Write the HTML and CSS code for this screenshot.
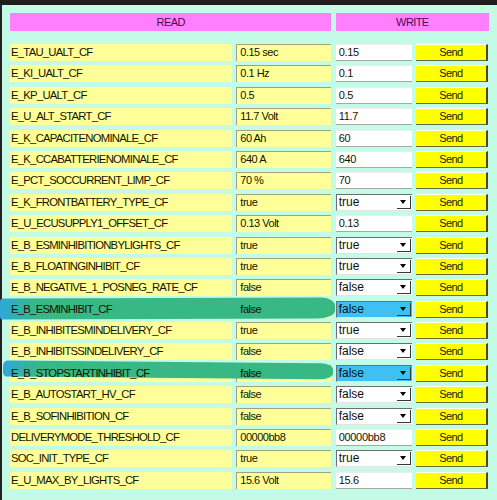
FILE: index.html
```html
<!DOCTYPE html>
<html>
<head>
<meta charset="utf-8">
<link rel="stylesheet" href="styles.css">
</head>
<body>
<div class="topbar"></div>
<div class="frame">
  <div class="mark mark-a"></div>
  <div class="mark mark-b"></div>
  <div class="table">
    <div class="head head-read">READ</div>
    <div class="head head-write">WRITE</div>

    <div class="lbl"><span class="txt">E_TAU_UALT_CF</span></div><div class="val"><span class="txt">0.15 sec</span></div><div class="inp">0.15</div><div class="send">Send</div>
    <div class="lbl"><span class="txt">E_KI_UALT_CF</span></div><div class="val"><span class="txt">0.1 Hz</span></div><div class="inp">0.1</div><div class="send">Send</div>
    <div class="lbl"><span class="txt">E_KP_UALT_CF</span></div><div class="val"><span class="txt">0.5</span></div><div class="inp">0.5</div><div class="send">Send</div>
    <div class="lbl"><span class="txt">E_U_ALT_START_CF</span></div><div class="val"><span class="txt">11.7 Volt</span></div><div class="inp">11.7</div><div class="send">Send</div>
    <div class="lbl"><span class="txt">E_K_CAPACITENOMINALE_CF</span></div><div class="val"><span class="txt">60 Ah</span></div><div class="inp">60</div><div class="send">Send</div>
    <div class="lbl"><span class="txt">E_K_CCABATTERIENOMINALE_CF</span></div><div class="val"><span class="txt">640 A</span></div><div class="inp">640</div><div class="send">Send</div>
    <div class="lbl"><span class="txt">E_PCT_SOCCURRENT_LIMP_CF</span></div><div class="val"><span class="txt">70 %</span></div><div class="inp">70</div><div class="send">Send</div>
    <div class="lbl"><span class="txt">E_K_FRONTBATTERY_TYPE_CF</span></div><div class="val"><span class="txt">true</span></div><div class="combo"><span class="ctext">true</span><span class="btn"><span class="tri"></span></span></div><div class="send">Send</div>
    <div class="lbl"><span class="txt">E_U_ECUSUPPLY1_OFFSET_CF</span></div><div class="val"><span class="txt">0.13 Volt</span></div><div class="inp">0.13</div><div class="send">Send</div>
    <div class="lbl"><span class="txt">E_B_ESMINHIBITIONBYLIGHTS_CF</span></div><div class="val"><span class="txt">true</span></div><div class="combo"><span class="ctext">true</span><span class="btn"><span class="tri"></span></span></div><div class="send">Send</div>
    <div class="lbl"><span class="txt">E_B_FLOATINGINHIBIT_CF</span></div><div class="val"><span class="txt">true</span></div><div class="combo"><span class="ctext">true</span><span class="btn"><span class="tri"></span></span></div><div class="send">Send</div>
    <div class="lbl"><span class="txt">E_B_NEGATIVE_1_POSNEG_RATE_CF</span></div><div class="val"><span class="txt">false</span></div><div class="combo"><span class="ctext">false</span><span class="btn"><span class="tri"></span></span></div><div class="send">Send</div>
    <div class="lbl"><span class="txt">E_B_ESMINHIBIT_CF</span></div><div class="val"><span class="txt">false</span></div><div class="combo combo-sel"><span class="ctext">false</span><span class="btn"><span class="tri"></span></span></div><div class="send">Send</div>
    <div class="lbl"><span class="txt">E_B_INHIBITESMINDELIVERY_CF</span></div><div class="val"><span class="txt">true</span></div><div class="combo"><span class="ctext">true</span><span class="btn"><span class="tri"></span></span></div><div class="send">Send</div>
    <div class="lbl"><span class="txt">E_B_INHIBITSSINDELIVERY_CF</span></div><div class="val"><span class="txt">false</span></div><div class="combo"><span class="ctext">false</span><span class="btn"><span class="tri"></span></span></div><div class="send">Send</div>
    <div class="lbl"><span class="txt">E_B_STOPSTARTINHIBIT_CF</span></div><div class="val"><span class="txt">false</span></div><div class="combo combo-sel"><span class="ctext">false</span><span class="btn"><span class="tri"></span></span></div><div class="send">Send</div>
    <div class="lbl"><span class="txt">E_B_AUTOSTART_HV_CF</span></div><div class="val"><span class="txt">false</span></div><div class="combo"><span class="ctext">false</span><span class="btn"><span class="tri"></span></span></div><div class="send">Send</div>
    <div class="lbl"><span class="txt">E_B_SOFINHIBITION_CF</span></div><div class="val"><span class="txt">false</span></div><div class="combo"><span class="ctext">false</span><span class="btn"><span class="tri"></span></span></div><div class="send">Send</div>
    <div class="lbl"><span class="txt">DELIVERYMODE_THRESHOLD_CF</span></div><div class="val"><span class="txt">00000bb8</span></div><div class="inp">00000bb8</div><div class="send">Send</div>
    <div class="lbl"><span class="txt">SOC_INIT_TYPE_CF</span></div><div class="val"><span class="txt">true</span></div><div class="combo"><span class="ctext">true</span><span class="btn"><span class="tri"></span></span></div><div class="send">Send</div>
    <div class="lbl"><span class="txt">E_U_MAX_BY_LIGHTS_CF</span></div><div class="val"><span class="txt">15.6 Volt</span></div><div class="inp">15.6</div><div class="send">Send</div>
  </div>
</div>
</body>
</html>
```
FILE: styles.css
```css
html, body {
  margin: 0;
  padding: 0;
}
body {
  background: #c4fbe6;
  font-family: "Liberation Sans", Arial, sans-serif;
  color: #141400;
  width: 497px;
  height: 500px;
  overflow: hidden;
}
.topbar {
  height: 5px;
  background: #1e1e1e;
}
.frame {
  position: relative;
  border-left: 2px solid #222;
  padding: 8px 0 0 8px;
  height: 495px;
  box-sizing: border-box;
}
.table {
  display: grid;
  grid-template-columns: 222px 95px 76px 72px;
  grid-template-rows: 26.6px;
  grid-auto-rows: 17px;
  column-gap: 4.33px;
  row-gap: 4.4px;
}
.head {
  height: 18px;
  align-self: start;
  background: #ff80ff;
  color: #4a0a4a;
  font-size: 11px;
  letter-spacing: -0.6px;
  line-height: 18px;
  text-align: center;
}
.head-read { grid-column: 1 / 3; }
.head-write { grid-column: 3 / 5; margin-right: -1px; }
.lbl {
  background: #ffff99;
  font-size: 11.3px;
  letter-spacing: -0.75px;
  line-height: 16px;
  padding-left: 1px;
  white-space: nowrap;
}
.val {
  background: #ffff99;
  border-top: 1px solid #a2a27a;
  border-left: 1px solid #a2a27a;
  box-sizing: border-box;
  font-size: 11px;
  letter-spacing: -0.5px;
  line-height: 15px;
  padding-left: 3px;
  white-space: nowrap;
}
.txt {
  position: relative;
  z-index: 2;
}
.inp {
  background: #fff;
  border-bottom: 1px solid #a8a8a8;
  border-top: 1px solid #ececec;
  box-sizing: border-box;
  font-size: 11px;
  letter-spacing: -0.3px;
  line-height: 15px;
  padding-left: 3px;
}
.combo {
  display: flex;
  align-items: center;
  background: #fff;
  border-top: 1px solid #6e6e6e;
  border-left: 1px solid #6e6e6e;
  border-bottom: 1px solid #e4e4e4;
  box-sizing: border-box;
  padding-left: 2px;
}
.combo-sel {
  background: #3ec0f2;
}
.ctext {
  font-size: 12px;
  line-height: 15px;
  color: #101010;
}
.btn {
  margin-left: auto;
  margin-right: 1px;
  width: 14px;
  height: 13px;
  box-sizing: border-box;
  border-right: 1px solid #383838;
  border-bottom: 1px solid #383838;
  display: flex;
  align-items: center;
  justify-content: center;
}
.tri {
  width: 0;
  height: 0;
  border-left: 3.5px solid transparent;
  border-right: 3.5px solid transparent;
  border-top: 4px solid #000;
}
.send {
  background: #ffff00;
  border-right: 2px solid #4a4a2a;
  border-bottom: 1px solid #6a6a40;
  border-top: 1px solid #fffff0;
  box-sizing: border-box;
  font-size: 11px;
  letter-spacing: -0.6px;
  line-height: 15px;
  text-align: center;
  color: #202010;
}
.mark {
  position: absolute;
  z-index: 1;
  background: linear-gradient(90deg, #2ea8dc 0px, #34b2a0 22px, #38b884 40px, #38b884 100%);
}
.mark-a {
  top: 293px;
  left: -2px;
  width: 335px;
  height: 21px;
  border-radius: 3px 14px 18px 2px / 4px 8px 8px 4px;
  transform: rotate(-0.15deg);
}
.mark-b {
  top: 357px;
  left: 1px;
  width: 330px;
  height: 16px;
  border-radius: 5px 12px 14px 3px / 5px 6px 6px 5px;
  transform: rotate(0.5deg);
}
```
